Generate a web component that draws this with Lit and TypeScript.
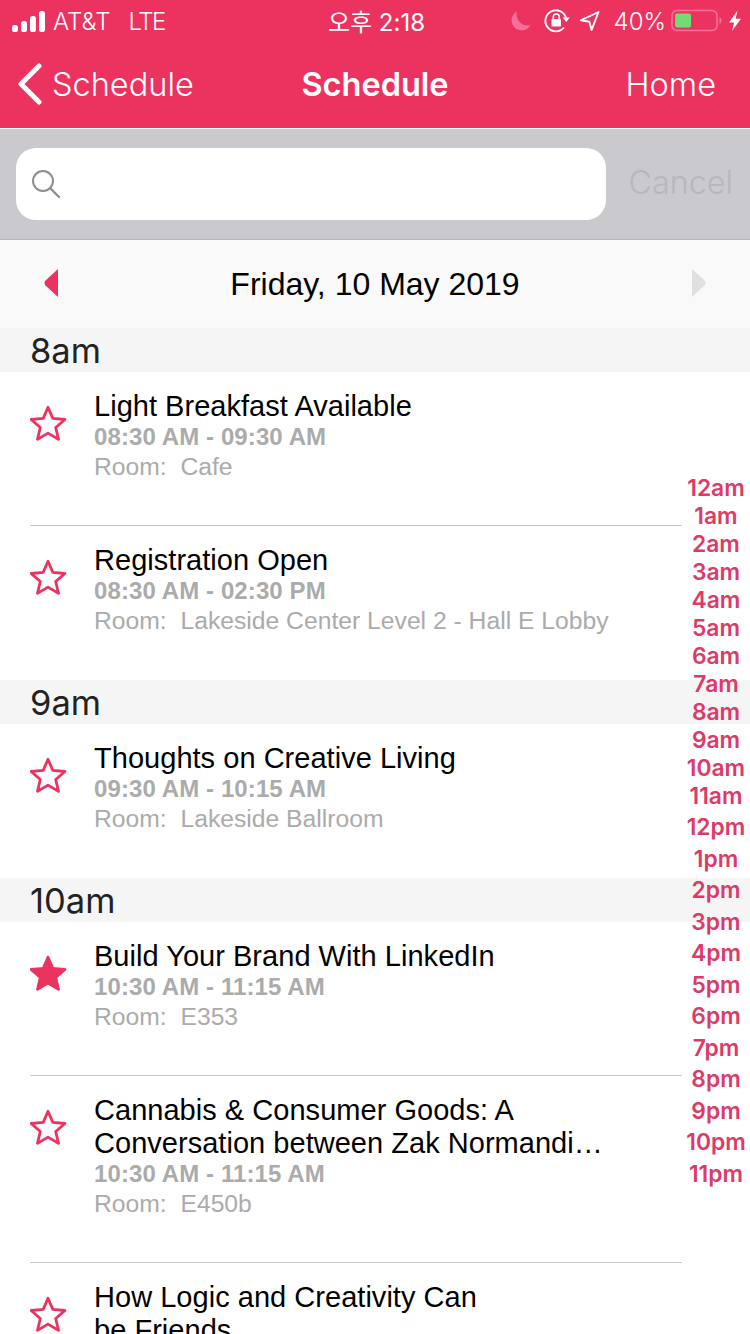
import { LitElement, html, css, svg, unsafeCSS } from "lit";
import { customElement } from "lit/decorators.js";

const PINK = "#ec3360";

type Item = { title: string[]; time: string; room: string; fav?: boolean; sep?: boolean };
type Section = { hour: string; items: Item[] };

const sections: Section[] = [
  {
    hour: "8am",
    items: [
      { title: ["Light Breakfast Available"], time: "08:30 AM - 09:30 AM", room: "Cafe", sep: true },
      { title: ["Registration Open"], time: "08:30 AM - 02:30 PM", room: "Lakeside Center Level 2 - Hall E Lobby" },
    ],
  },
  {
    hour: "9am",
    items: [{ title: ["Thoughts on Creative Living"], time: "09:30 AM - 10:15 AM", room: "Lakeside Ballroom" }],
  },
  {
    hour: "10am",
    items: [
      { title: ["Build Your Brand With LinkedIn"], time: "10:30 AM - 11:15 AM", room: "E353", fav: true, sep: true },
      {
        title: ["Cannabis & Consumer Goods: A", "Conversation between Zak Normandi…"],
        time: "10:30 AM - 11:15 AM",
        room: "E450b",
        sep: true,
      },
      { title: ["How Logic and Creativity Can", "be Friends"], time: "10:30 AM - 11:15 AM", room: "E353" },
    ],
  },
];

const amHours = ["12am", "1am", "2am", "3am", "4am", "5am", "6am", "7am", "8am", "9am", "10am", "11am"];
const pmHours = ["12pm", "1pm", "2pm", "3pm", "4pm", "5pm", "6pm", "7pm", "8pm", "9pm", "10pm", "11pm"];

const starPath =
  "M18 2.2 L22.8 13.4 L34.9 14.5 L25.7 22.5 L28.5 34.4 L18 28.1 L7.5 34.4 L10.3 22.5 L1.1 14.5 L13.2 13.4 Z";

@customElement("app-root")
export class AppRoot extends LitElement {
  static styles = css`
    :host {
      display: block;
      position: relative;
      width: 750px;
      height: 1334px;
      overflow: hidden;
      background: #fff;
      font-family: "Liberation Sans", Arial, sans-serif;
    }
    .top {
      background: ${unsafeCSS(PINK)};
      height: 128px;
      color: #fff;
      display: flex;
      flex-direction: column;
      font-family: Inter, "Noto Sans CJK KR", sans-serif;
    }
    .status {
      height: 42px;
      display: grid;
      grid-template-columns: 1fr auto 1fr;
      align-items: center;
      font-size: 24px;
      font-weight: 300;
    }
    .st-left {
      display: flex;
      align-items: center;
      padding-left: 12px;
    }
    .st-left svg {
      display: block;
      margin-right: 8px;
    }
    .lte {
      margin-left: 18px;
      letter-spacing: -1.5px;
    }
    .st-time {
      font-family: Inter, "Noto Sans CJK KR", sans-serif;
      font-weight: 400;
      font-size: 24px;
      padding: 0 0 2px 3px;
    }
    .st-right {
      display: flex;
      align-items: center;
      justify-content: flex-end;
      padding-right: 8px;
    }
    .st-right svg {
      display: block;
    }
    .pct {
      margin: 0 5px 0 13px;
    }
    .nav {
      flex: 1;
      display: grid;
      grid-template-columns: 1fr auto 1fr;
      align-items: center;
      font-size: 32.5px;
      font-weight: 300;
      padding-bottom: 2px;
    }
    .back {
      display: flex;
      align-items: center;
      padding-left: 17px;
      gap: 9px;
    }
    .back svg {
      display: block;
    }
    .nav-title {
      font-weight: 600;
    }
    .home {
      justify-self: end;
      padding-right: 34px;
    }
    .search {
      height: 111px;
      box-sizing: border-box;
      margin-top: 1px;
      background: #c9c9ce;
      display: flex;
      align-items: center;
      padding: 0 17px 0 16px;
      gap: 22px;
      border-bottom: 1px solid #b5b5b9;
    }
    .field {
      flex: 1;
      height: 72px;
      background: #fff;
      border-radius: 20px;
      display: flex;
      align-items: center;
      padding-left: 15px;
    }
    .field svg {
      display: block;
    }
    .cancel {
      font-family: Inter, sans-serif;
      font-size: 32.3px;
      font-weight: 300;
      color: #b7b7bb;
      margin-bottom: 4px;
    }
    .date {
      height: 88px;
      background: #f9f9f9;
      display: flex;
      align-items: center;
      justify-content: space-between;
      padding: 0 44px;
      font-size: 32px;
      color: #000;
      box-sizing: border-box;
    }
    .date svg {
      display: block;
      margin-bottom: 2px;
    }
    .hour {
      height: 44px;
      background: #f5f5f5;
      padding-left: 30px;
      font-family: Inter, sans-serif;
      font-size: 34.5px;
      line-height: 46px;
      color: #222;
    }
    .row {
      display: flex;
      height: 154px;
      box-sizing: border-box;
      margin-right: 68px;
      margin-left: 30px;
      border-bottom: 1px solid transparent;
    }
    .row.sep {
      border-bottom-color: #c8c8c8;
    }
    .row.tall {
      height: 187px;
    }
    .star {
      width: 37px;
      height: 37px;
      flex: none;
      margin-top: 33px;
      display: block;
    }
    .info {
      margin-left: 27px;
      padding-top: 18px;
      min-width: 0;
    }
    .title {
      font-size: 29px;
      line-height: 33px;
      letter-spacing: 0.03px;
      color: #000;
      white-space: nowrap;
    }
    .time {
      font-size: 24px;
      line-height: 28px;
      letter-spacing: 0.1px;
      font-weight: 700;
      color: #ababab;
      white-space: nowrap;
    }
    .room {
      font-size: 24.7px;
      line-height: 31px;
      color: #ababab;
      white-space: pre;
    }
    .index {
      position: absolute;
      top: 474px;
      right: 0;
      width: 68px;
      display: flex;
      flex-direction: column;
      align-items: center;
      font-family: Inter, sans-serif;
      font-size: 22.8px;
      font-weight: 600;
      color: #dd3a68;
    }
    .index div {
      height: 28px;
      line-height: 28px;
    }
    .index .pm {
      height: 31.55px;
      line-height: 31.55px;
    }
    .index .first-pm {
      margin-top: 1px;
    }
  `;

  private star(fav?: boolean) {
    return html`<svg class="star" viewBox="0 0 37 37" aria-hidden="true">
      <path
        d=${starPath}
        fill=${fav ? PINK : "none"}
        stroke=${PINK}
        stroke-width="2.8"
        stroke-linejoin="round"
      ></path>
    </svg>`;
  }

  private signal() {
    const bars = [
      [0, 15, 6, 7],
      [9, 11, 6, 11],
      [18, 6, 6, 16],
      [27, 1, 6, 21],
    ];
    return html`<svg width="33" height="22" viewBox="0 0 33 22" aria-hidden="true">
      ${bars.map(
        ([x, y, w, h]) => svg`<rect x=${x} y=${y} width=${w} height=${h} rx="2.6" fill="#fff"></rect>`
      )}
    </svg>`;
  }

  private statusRight() {
    return html`
      <svg width="28" height="26" viewBox="0 0 28 26" aria-hidden="true">
        <path d="M11 3.5 A10 10 0 1 0 24.5 17 A11 11 0 0 1 11 3.5 Z" fill="#f4709a"></path>
      </svg>
      <svg width="32" height="26" viewBox="0 0 32 26" style="margin-left:9px" aria-hidden="true">
        <path d="M21 19.5 A10.5 10.5 0 1 1 23 10" fill="none" stroke="#fff" stroke-width="1.9"></path>
        <path d="M19.6 9.6 L26.8 9.6 L23.2 14 Z" fill="#fff"></path>
        <rect x="8.5" y="11" width="9.5" height="7.5" rx="1" fill="#fff"></rect>
        <path d="M10.3 11 V9 A3 3 0 0 1 16.3 9 V11" fill="none" stroke="#fff" stroke-width="1.6"></path>
      </svg>
      <svg width="22" height="22" viewBox="0 0 22 22" style="margin-left:4px" aria-hidden="true">
        <path d="M19.5 2 L1.8 10.3 L10.4 11.8 L12.6 20 Z" fill="none" stroke="#fff" stroke-width="1.9" stroke-linejoin="round"></path>
      </svg>
      <span class="pct">40%</span>
      <svg width="52" height="24" viewBox="0 0 52 24" aria-hidden="true">
        <rect x="1" y="1.5" width="45" height="20" rx="5" fill="none" stroke="#f4709a" stroke-width="1.6"></rect>
        <rect x="4" y="4.5" width="16" height="14" rx="2" fill="#72db74"></rect>
        <path d="M48.5 8 A4 4 0 0 1 48.5 15 Z" fill="#f4709a"></path>
      </svg>
      <svg width="14" height="22" viewBox="0 0 14 22" style="margin-left:5px" aria-hidden="true">
        <path d="M9.5 0.5 L1 12.5 H6 L4 21 L13 8.8 H7.6 Z" fill="#fff"></path>
      </svg>
    `;
  }

  render() {
    return html`
      <div class="top">
        <div class="status">
          <div class="st-left">${this.signal()}<span>AT&amp;T</span><span class="lte">LTE</span></div>
          <div class="st-time">오후 2:18</div>
          <div class="st-right">${this.statusRight()}</div>
        </div>
        <div class="nav">
          <div class="back">
            <svg width="26" height="42" viewBox="0 0 26 42" aria-hidden="true">
              <path d="M22 3 L4 21 L22 39" fill="none" stroke="#fff" stroke-width="5" stroke-linecap="round" stroke-linejoin="round"></path>
            </svg>
            <span>Schedule</span>
          </div>
          <div class="nav-title">Schedule</div>
          <div class="home">Home</div>
        </div>
      </div>
      <div class="search">
        <div class="field">
          <svg width="30" height="30" viewBox="0 0 30 30" aria-hidden="true">
            <circle cx="12" cy="12" r="10" fill="none" stroke="#8e8e93" stroke-width="2"></circle>
            <path d="M19.5 19.5 L28 28" stroke="#8e8e93" stroke-width="2.4" stroke-linecap="round"></path>
          </svg>
        </div>
        <div class="cancel">Cancel</div>
      </div>
      <div class="date">
        <svg width="14" height="28" viewBox="0 0 14 28" aria-hidden="true"><path d="M14 0 V28 L1 16 Q0 14 1 12 Z" fill=${PINK}></path></svg>
        <span>Friday, 10 May 2019</span>
        <svg width="14" height="28" viewBox="0 0 14 28" aria-hidden="true"><path d="M0 0 V28 L13 16 Q14 14 13 12 Z" fill="#e0e0e0"></path></svg>
      </div>
      ${sections.map(
        (s) => html`
          <div class="hour">${s.hour}</div>
          ${s.items.map(
            (it) => html`
              <div class="row ${it.sep ? "sep" : ""} ${it.title.length > 1 ? "tall" : ""}">
                ${this.star(it.fav)}
                <div class="info">
                  ${it.title.map((t) => html`<div class="title">${t}</div>`)}
                  <div class="time">${it.time}</div>
                  <div class="room">Room:  ${it.room}</div>
                </div>
              </div>
            `
          )}
        `
      )}
      <div class="index">
        ${amHours.map((h) => html`<div>${h}</div>`)}
        ${pmHours.map((h, i) => html`<div class="pm ${i === 0 ? "first-pm" : ""}">${h}</div>`)}
      </div>
    `;
  }
}
